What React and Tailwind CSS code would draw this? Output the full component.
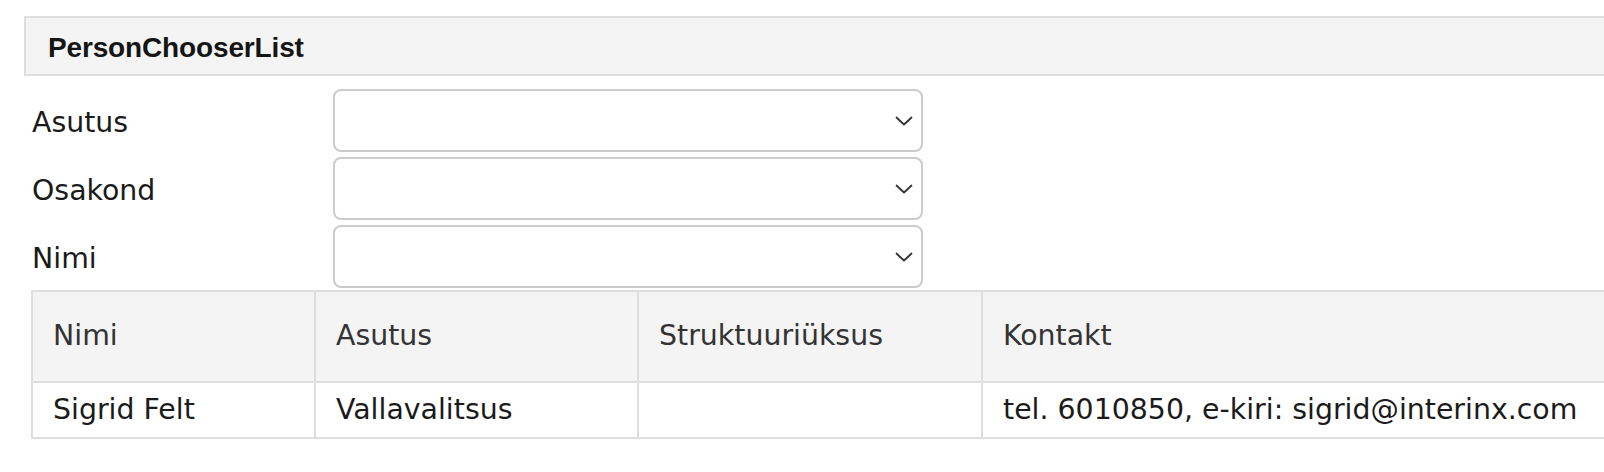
import React from "react";

const fields = ["Asutus", "Osakond", "Nimi"];

const columns = [
  { title: "Nimi", width: "w-[283px]" },
  { title: "Asutus", width: "w-[323px]" },
  { title: "Struktuuriüksus", width: "w-[344px]" },
  { title: "Kontakt", width: "w-[660px]" },
];

const rows = [
  {
    id: 1,
    name: "Sigrid Felt",
    org: "Vallavalitsus",
    unit: "",
    contact: "tel. 6010850, e-kiri: sigrid@interinx.com",
  },
];

const Chevron = () => (
  <svg
    width="18"
    height="10"
    viewBox="0 0 18 10"
    fill="none"
    className="absolute right-[8px] top-1/2 -translate-y-1/2"
  >
    <path
      d="M1.5 1.5 L9 8.5 L16.5 1.5"
      stroke="#333"
      strokeWidth="1.8"
      strokeLinecap="round"
      strokeLinejoin="round"
    />
  </svg>
);

const SelectBox = () => (
  <div className="relative w-[590px] h-[63px] rounded-[8px] border-2 border-[#cbcbcb] bg-white">
    <Chevron />
  </div>
);

export default function App() {
  return (
    <div className="w-full overflow-hidden bg-white min-h-[472px]">
      <div className="w-[1680px] pt-[16px] pl-[24px] font-['DejaVu_Sans',Verdana,sans-serif] text-[28.4px] text-[#1b1b1b]">
        {/* Title Header */}
        <div className="h-[60px] flex items-center pl-[22px] pt-[4px] border-2 border-[#dedede] bg-[#f4f4f4]">
          <h2 className="font-['Liberation_Sans',Arial,sans-serif] font-bold text-[28px] text-[#151515] tracking-[-0.15px]">
            PersonChooserList
          </h2>
        </div>

        {/* Filters */}
        <div className="mt-[13px] flex flex-col gap-[5px]">
          {fields.map((label) => (
            <div key={label} className="flex items-center">
              <span className="w-[309px] pl-[8px] pt-[6px]">{label}</span>
              <SelectBox />
            </div>
          ))}
        </div>

        {/* Results */}
        <table className="mt-[2px] ml-[7px] border-collapse">
          <thead>
            <tr className="bg-[#f4f4f4] h-[91px]">
              {columns.map((col) => (
                <th
                  key={col.title}
                  className={`${col.width} border-2 border-[#dedede] px-[20px] text-left font-normal text-[#333333]`}
                >
                  {col.title}
                </th>
              ))}
            </tr>
          </thead>
          <tbody>
            {rows.map((r) => (
              <tr key={r.id} className="h-[56px]">
                <td className="border-2 border-[#dedede] px-[20px]">{r.name}</td>
                <td className="border-2 border-[#dedede] px-[20px]">{r.org}</td>
                <td className="border-2 border-[#dedede] px-[20px]">{r.unit}</td>
                <td className="border-2 border-[#dedede] px-[20px] whitespace-nowrap">
                  {r.contact}
                </td>
              </tr>
            ))}
          </tbody>
        </table>
      </div>
    </div>
  );
}
